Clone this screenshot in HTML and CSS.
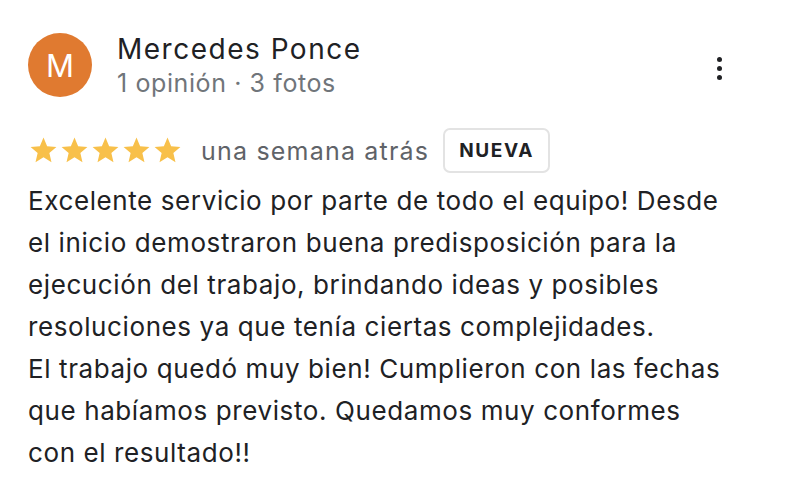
FILE: index.html
```html
<!DOCTYPE html>
<html>
<head>
  <link rel="stylesheet" href="styles.css">
</head>
<body>
  <div class="review">
    <div class="header">
      <div class="avatar">M</div>
      <div class="header-text">
        <h1>Mercedes Ponce</h1>
        <p>1 opinión · 3 fotos</p>
      </div>
      <div class="menu">
        <span></span><span></span><span></span>
      </div>
    </div>

    <div class="meta">
      <div class="stars">
        <svg viewBox="0 0 24 24"><path d="M12 17.27L18.18 21l-1.64-7.03L22 9.24l-7.19-.61L12 2 9.19 8.63 2 9.24l5.46 4.73L5.82 21z"/></svg>
        <svg viewBox="0 0 24 24"><path d="M12 17.27L18.18 21l-1.64-7.03L22 9.24l-7.19-.61L12 2 9.19 8.63 2 9.24l5.46 4.73L5.82 21z"/></svg>
        <svg viewBox="0 0 24 24"><path d="M12 17.27L18.18 21l-1.64-7.03L22 9.24l-7.19-.61L12 2 9.19 8.63 2 9.24l5.46 4.73L5.82 21z"/></svg>
        <svg viewBox="0 0 24 24"><path d="M12 17.27L18.18 21l-1.64-7.03L22 9.24l-7.19-.61L12 2 9.19 8.63 2 9.24l5.46 4.73L5.82 21z"/></svg>
        <svg viewBox="0 0 24 24"><path d="M12 17.27L18.18 21l-1.64-7.03L22 9.24l-7.19-.61L12 2 9.19 8.63 2 9.24l5.46 4.73L5.82 21z"/></svg>
      </div>
      <span class="date">una semana atrás</span>
      <span class="badge">NUEVA</span>
    </div>

    <p class="text">Excelente servicio por parte de todo el equipo! Desde el inicio demostraron buena predisposición para la ejecución del trabajo, brindando ideas y posibles resoluciones ya que tenía ciertas complejidades.<br>El trabajo quedó muy bien! Cumplieron con las fechas que habíamos previsto. Quedamos muy conformes con el resultado!!</p>
  </div>
</body>
</html>
```

FILE: styles.css
```css
body {
  margin: 0;
  background: #fff;
  font-family: Inter, Roboto, "Liberation Sans", sans-serif;
  color: #202124;
}
.review {
  padding: 32px 28px 0 28px;
  width: 700px;
}
.header {
  display: flex;
  align-items: center;
}
.avatar {
  width: 64px;
  height: 64px;
  border-radius: 50%;
  background-color: #e07a30;
  color: #fff;
  font-size: 31px;
  display: flex;
  align-items: center;
  justify-content: center;
  flex-shrink: 0;
}
.header-text {
  flex: 1;
  margin-left: 25px;
}
.header-text h1 {
  margin: 0;
  font-size: 28px;
  font-weight: 400;
  line-height: 34px;
  letter-spacing: 1.5px;
  color: #202124;
}
.header-text p {
  margin: 2px 0 0 0;
  font-size: 25px;
  line-height: 30px;
  letter-spacing: 0.6px;
  color: #70757a;
}
.menu {
  display: flex;
  flex-direction: column;
  gap: 4px;
  margin-right: 6px;
  margin-top: 6px;
}
.menu span {
  width: 5px;
  height: 5px;
  border-radius: 50%;
  background-color: #202124;
}
.meta {
  display: flex;
  align-items: center;
  margin-top: 30px;
}
.stars {
  display: flex;
}
.stars svg {
  width: 31px;
  height: 31px;
  fill: #f8c04a;
}
.date {
  margin-left: 18px;
  font-size: 25px;
  letter-spacing: 1.2px;
  color: #5f6368;
}
.badge {
  margin-left: 14px;
  padding: 9px 14px;
  border: 2px solid #e3e3e3;
  border-radius: 7px;
  font-size: 19px;
  font-weight: 700;
  letter-spacing: 1.6px;
  color: #202124;
}
.text {
  margin: 7px 0 0 0;
  font-size: 26px;
  line-height: 42px;
  letter-spacing: 0.6px;
  color: #202124;
}
```
